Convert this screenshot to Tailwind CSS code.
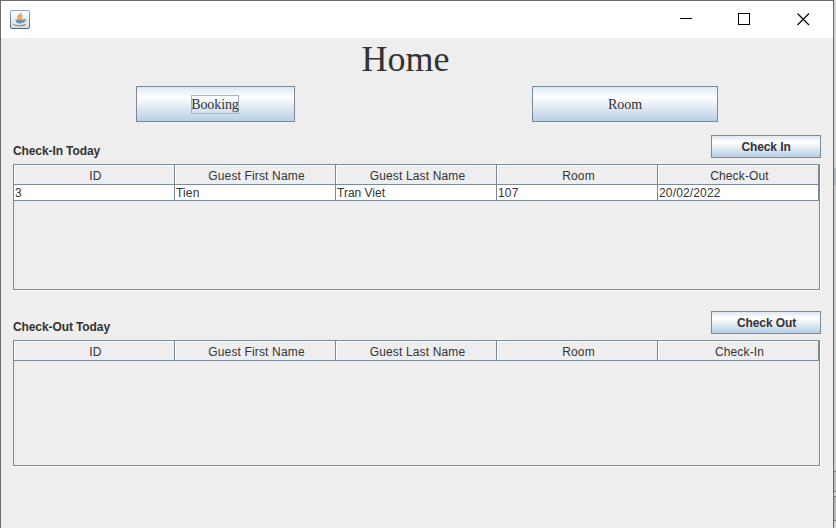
<!DOCTYPE html>
<html lang="en">
<head>
<meta charset="utf-8">
<title>Home</title>
<script src="https://cdn.jsdelivr.net/npm/@tailwindcss/browser@4"></script>
</head>
<body class="w-[836px] h-[528px] overflow-hidden bg-[#c8c8c8] flex font-['Liberation_Sans',Arial,sans-serif] text-[12px] text-[#333333]">
<div class="w-[834px] h-[528px] shrink-0 border-t border-x border-[#6b6b6d] bg-[#eeeeee] flex flex-col">
  <header class="h-[37px] shrink-0 bg-white flex items-center justify-between">
    <svg class="ml-[9px] -mt-px w-5 h-[19px]" viewBox="0 0 20 19">
      <defs><linearGradient id="b" x2="0" y2="1"><stop stop-color="#8fa9bb"/><stop offset="1" stop-color="#4d6a80"/></linearGradient><linearGradient id="f" x2="0" y2="1"><stop stop-color="#fff"/><stop offset="1" stop-color="#dcdcdc"/></linearGradient></defs>
      <rect x=".5" y=".5" width="19" height="18" rx="1.5" fill="url(#f)" stroke="url(#b)"/>
      <path d="M10.800 3c.6 2-3.300 2.600-2.800 4.300.2.900 1.200 1.200 1.200 2M12.500 5.500c-2 .7-2.600 1.600-1.500 2.500.5.600.1 1-.4 1.400" fill="none" stroke="#e58a40" stroke-width="1.500"/>
      <path d="M5 9.500h9v1.500c0 1.500-1.500 2.500-4.200 2.500s-3.800-1-3.800-2.500z" fill="#7594a8"/>
      <path d="M13.500 9.500c3-.4 2.500 2-.3 2.500M3.500 14.200c.5 1.900 10 1.900 12 0" fill="none" stroke="#7594a8" stroke-width="1.200"/>
    </svg>
    <div class="flex items-center mr-[23px] gap-[46px]">
      <svg class="w-[13px] h-[13px]" viewBox="0 0 13 13" shape-rendering="crispEdges"><path d="M1 5.500h12" stroke="#000"/></svg>
      <svg class="w-[13px] h-[13px]" viewBox="0 0 13 13"><rect x=".5" y=".5" width="11" height="11" fill="none" stroke="#000"/></svg>
      <svg class="w-[13px] h-[13px]" viewBox="0 0 13 13"><path d="M.5.500l11.500 11.500M12 .500l-11.500 11.500" stroke="#000" stroke-width="1.100"/></svg>
    </div>
  </header>
  <main class="flex-1 flex flex-col pl-3 pr-3">
    <h1 class="h-[48px] -ml-[3px] pt-px text-center font-['Liberation_Serif',serif] text-[36px] leading-[40px] pr-[20px]">Home</h1>
    <div class="flex font-['Liberation_Serif',serif] text-[14px]">
      <button class="ml-[123px] pr-px w-[159px] h-9 border border-[#7a8a99] bg-linear-to-b from-[#dde8f3] via-white via-30% to-[#b8cfe5] flex items-center justify-center"><span class="w-12 h-[19px] border border-[#a3b8cc] leading-[17px] flex justify-center tracking-[-0.1px]">Booking</span></button>
      <button class="ml-[237px] w-[186px] h-9 border border-[#7a8a99] bg-linear-to-b from-[#dde8f3] via-white via-30% to-[#b8cfe5]">Room</button>
    </div>
    <section class="mt-[13px] h-[176px] shrink-0">
      <div class="flex justify-between h-[29px] font-bold">
        <h2 class="pt-[8px] leading-[16px] tracking-[-0.1px]">Check-In Today</h2>
        <button class="w-[110px] h-[23px] tracking-[-0.1px] border border-[#7a8a99] bg-linear-to-b from-[#dde8f3] via-white via-30% to-[#b8cfe5]">Check In</button>
      </div>
      <div class="w-[808px] h-[127px] border-r border-b border-white"><div class="w-[807px] h-[126px] border border-[#7a8a99]">
        <div class="grid grid-cols-[repeat(5,161px)] h-5 text-center tracking-[0.15px] leading-[20px]">
          <div class="border-r border-b border-[#7a8a99]"><div class="h-[19px] pl-[2px] border-l border-t border-white">ID</div></div>
          <div class="border-r border-b border-[#7a8a99]"><div class="h-[19px] pl-[2px] border-l border-t border-white">Guest First Name</div></div>
          <div class="border-r border-b border-[#7a8a99]"><div class="h-[19px] pl-[2px] border-l border-t border-white">Guest Last Name</div></div>
          <div class="border-r border-b border-[#7a8a99]"><div class="h-[19px] pl-[2px] border-l border-t border-white">Room</div></div>
          <div class="border-r border-b border-[#7a8a99]"><div class="h-[19px] pl-[2px] border-l border-t border-white">Check-Out</div></div>
        </div>
        <div class="grid grid-cols-[repeat(5,161px)] h-4 bg-white leading-[16px] tracking-[0.15px]">
          <div class="h-4 border-r border-b border-[#7a8a99] pl-px">3</div>
          <div class="h-4 border-r border-b border-[#7a8a99] pl-px">Tien</div>
          <div class="h-4 border-r border-b border-[#7a8a99] pl-px tracking-normal">Tran Viet</div>
          <div class="h-4 border-r border-b border-[#7a8a99] pl-px">107</div>
          <div class="h-4 border-r border-b border-[#7a8a99] pl-px">20/02/2022</div>
        </div>
      </div></div>
    </section>
    <section class="h-[176px] shrink-0">
      <div class="flex justify-between h-[29px] font-bold">
        <h2 class="pt-[8px] leading-[16px] tracking-[-0.1px]">Check-Out Today</h2>
        <button class="w-[110px] h-[23px] pl-px tracking-[-0.1px] border border-[#7a8a99] bg-linear-to-b from-[#dde8f3] via-white via-30% to-[#b8cfe5]">Check Out</button>
      </div>
      <div class="w-[808px] h-[127px] border-r border-b border-white"><div class="w-[807px] h-[126px] border border-[#7a8a99]">
        <div class="grid grid-cols-[repeat(5,161px)] h-5 text-center tracking-[0.15px] leading-[20px]">
          <div class="border-r border-b border-[#7a8a99]"><div class="h-[19px] pl-[2px] border-l border-t border-white">ID</div></div>
          <div class="border-r border-b border-[#7a8a99]"><div class="h-[19px] pl-[2px] border-l border-t border-white">Guest First Name</div></div>
          <div class="border-r border-b border-[#7a8a99]"><div class="h-[19px] pl-[2px] border-l border-t border-white">Guest Last Name</div></div>
          <div class="border-r border-b border-[#7a8a99]"><div class="h-[19px] pl-[2px] border-l border-t border-white">Room</div></div>
          <div class="border-r border-b border-[#7a8a99]"><div class="h-[19px] pl-[2px] border-l border-t border-white">Check-In</div></div>
        </div>
      </div></div>
    </section>
  </main>
</div>
<aside class="w-[2px] h-[528px] shrink-0 flex flex-col bg-[#d4d4d4]">
  <div class="h-[168px]"></div>
  <div class="h-[18px] bg-[#b4b8bc]"></div>
  <div class="h-[285px] bg-[#cbcbcb]"></div>
  <div class="h-[21px] border-y border-[#777777] bg-[#bdbdbd]"></div>
  <div class="h-[25px] mt-1 border-y border-[#777777] bg-[#b8b8b8]"></div>
</aside>
</body>
</html>
